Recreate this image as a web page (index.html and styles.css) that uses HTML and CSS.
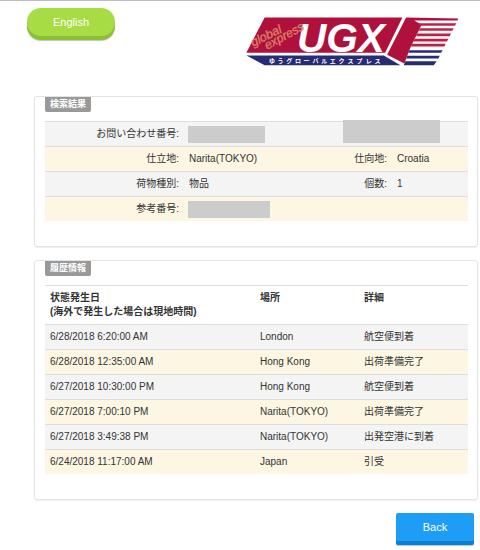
FILE: index.html
```
<!DOCTYPE html>
<html lang="ja">
<head>
    <meta charset="UTF-8">
    <meta name="viewport" content="width=device-width, initial-scale=1.0">
    <title>ゆうグローバルエクスプレス</title>
    <link rel="stylesheet" href="styles.css">
</head>
<body>
    <header class="header">
        <button type="button" class="btn btn-lang">English</button>
        <svg class="logo" viewBox="48 50 640 146" role="img" aria-label="UGX">
            <polygon points="104,51 518,51 466,157 49,157" fill="#b0103c"/>
            <polygon points="49,165 462,165 512,194 104,194" fill="#262b74"/>
            <!-- 右側の箱とスピード線 -->
            <polygon points="529,51 686,54 683,60 553,60 576,72 541,143 524,189 472,163" fill="#b0103c"/>
            <g fill="#c02048">
                <polygon points="568,68 680,68 676,76 572,76"/>
                <polygon points="571,83 672,83 668,91 567,91"/>
                <polygon points="563,99 664,99 660,107 559,107"/>
                <polygon points="555,115 656,115 652,123 551,123"/>
                <polygon points="547,130 648,130 644,138 543,138"/>
            </g>
            <g fill="#262b74">
                <polygon points="539,149 639,149 634,157 536,157"/>
                <polygon points="533,166 630,166 626,174 530,174"/>
                <polygon points="527,182 621,182 612,194 522,194"/>
            </g>
            <text class="logo-main" x="201" y="156">UGX</text>
            <text class="logo-sub" transform="translate(70 139) rotate(-27)">global</text>
            <text class="logo-sub" transform="translate(112 148) rotate(-29)">express</text>
            <text class="logo-kana" x="117 143 169 195 221 248 274 300 326 353 380 408 434" y="187">ゆうグローバルエクスプレス</text>
        </svg>
    </header>

    <main class="main">
        <section class="panel">
            <h2 class="panel-label">検索結果</h2>
            <table class="table result">
                <colgroup>
                    <col class="col-label">
                    <col>
                    <col class="col-label2">
                    <col class="col-value2">
                </colgroup>
                <tr>
                    <th scope="row">お問い合わせ番号:</th>
                    <td><span class="mask mask-number"></span></td>
                    <td colspan="2" class="mask-cell"><span class="mask mask-over"></span></td>
                </tr>
                <tr>
                    <th scope="row">仕立地:</th>
                    <td>Narita(TOKYO)</td>
                    <th scope="row">仕向地:</th>
                    <td>Croatia</td>
                </tr>
                <tr>
                    <th scope="row">荷物種別:</th>
                    <td>物品</td>
                    <th scope="row">個数:</th>
                    <td>1</td>
                </tr>
                <tr>
                    <th scope="row">参考番号:</th>
                    <td><span class="mask mask-ref"></span></td>
                    <td></td>
                    <td></td>
                </tr>
            </table>
        </section>

        <section class="panel">
            <h2 class="panel-label">履歴情報</h2>
            <table class="table history">
                <colgroup>
                    <col>
                    <col class="col-place">
                    <col class="col-detail">
                </colgroup>
                <thead>
                    <tr>
                        <th scope="col">状態発生日<br>(海外で発生した場合は現地時間)</th>
                        <th scope="col">場所</th>
                        <th scope="col">詳細</th>
                    </tr>
                </thead>
                <tbody>
                    <tr><td>6/28/2018 6:20:00 AM</td><td>London</td><td>航空便到着</td></tr>
                    <tr><td>6/28/2018 12:35:00 AM</td><td>Hong Kong</td><td>出荷準備完了</td></tr>
                    <tr><td>6/27/2018 10:30:00 PM</td><td>Hong Kong</td><td>航空便到着</td></tr>
                    <tr><td>6/27/2018 7:00:10 PM</td><td>Narita(TOKYO)</td><td>出荷準備完了</td></tr>
                    <tr><td>6/27/2018 3:49:38 PM</td><td>Narita(TOKYO)</td><td>出発空港に到着</td></tr>
                    <tr><td>6/24/2018 11:17:00 AM</td><td>Japan</td><td>引受</td></tr>
                </tbody>
            </table>
        </section>

        <div class="actions">
            <button type="button" class="btn btn-back">Back</button>
        </div>
    </main>
</body>
</html>
```
FILE: styles.css
```
* {
    box-sizing: border-box;
}
body {
    margin: 0;
    border-top: 1px solid #bcbcbe;
    background: #fff;
    color: #333;
    font-family: "Liberation Sans", "Noto Sans CJK JP", sans-serif;
    font-size: 10px;
    line-height: 14px;
}
.header {
    display: flex;
    justify-content: space-between;
    align-items: flex-start;
    padding: 7px 21px 0 27px;
    height: 95px;
}
.btn {
    border: none;
    padding: 0;
    color: #fff;
    font-family: inherit;
    font-size: 11px;
    cursor: pointer;
}
.btn-lang {
    width: 88px;
    height: 28px;
    border-radius: 14px;
    background: #a8dc44;
    box-shadow: 0 4px 0 #8cc032, 0 5px 1px rgba(0, 0, 0, 0.25);
}
.btn-lang:hover {
    background: #b2e354;
}
.logo {
    width: 213px;
    height: 49px;
    margin-top: 9px;
    overflow: visible;
}
.logo-main {
    fill: #fff;
    font-size: 122px;
    font-weight: bold;
    font-style: italic;
}
.logo-sub {
    fill: #dc8068;
    stroke: #dc8068;
    stroke-width: 1px;
    font-size: 37px;
    font-style: italic;
}
.logo-kana {
    fill: #fff;
    font-size: 18px;
    font-weight: bold;
}
.main {
    padding: 0 2px 0 34px;
}
.panel {
    margin-bottom: 13px;
    padding: 0 9px 25px 10px;
    border: 1px solid #e3e3e3;
    border-radius: 3px;
    box-shadow: 0 1px 1px rgba(0, 0, 0, 0.06);
}
.panel-label {
    width: max-content;
    margin: 0 0 9px;
    padding: 0 5px;
    border-radius: 0 0 2px 2px;
    background: #999;
    color: #fff;
    font-size: 9px;
    line-height: 15px;
}
.table {
    width: 100%;
    border-collapse: separate;
    border-spacing: 0;
    table-layout: fixed;
}
.table th,
.table td {
    height: 25px;
    padding: 0 5px;
    border-top: 1px solid #ddd;
    text-align: left;
}
.result th {
    text-align: right;
    font-weight: normal;
}
.result tr:nth-child(odd),
.history tbody tr:nth-child(odd) {
    background: #f4f4f4;
}
.result tr:nth-child(even),
.history tbody tr:nth-child(even) {
    background: #fcf6e2;
}
.history thead th {
    height: 39px;
    vertical-align: top;
    padding-top: 5px;
}
.col-label {
    width: 139px;
}
.col-label2 {
    width: 104px;
}
.col-value2 {
    width: 76px;
}
.col-place {
    width: 104px;
}
.col-detail {
    width: 109px;
}
/* 伏せ字 */
.mask {
    display: block;
    height: 17px;
    margin-left: -1px;
    background: #ccc;
}
.mask-number {
    width: 77px;
}
.mask-ref {
    width: 82px;
}
.mask-cell {
    position: relative;
}
.mask-over {
    position: absolute;
    top: -2px;
    right: 28px;
    width: 97px;
    height: 23px;
}
.actions {
    display: flex;
    justify-content: flex-end;
    padding: 0 4px 6px 0;
}
.btn-back {
    width: 78px;
    height: 28px;
    border-radius: 2px;
    background: #1e9df7;
    box-shadow: 0 4px 0 #0a80d4, 0 5px 1px rgba(0, 0, 0, 0.25);
}
.btn-back:hover {
    background: #3aaafa;
}
```
